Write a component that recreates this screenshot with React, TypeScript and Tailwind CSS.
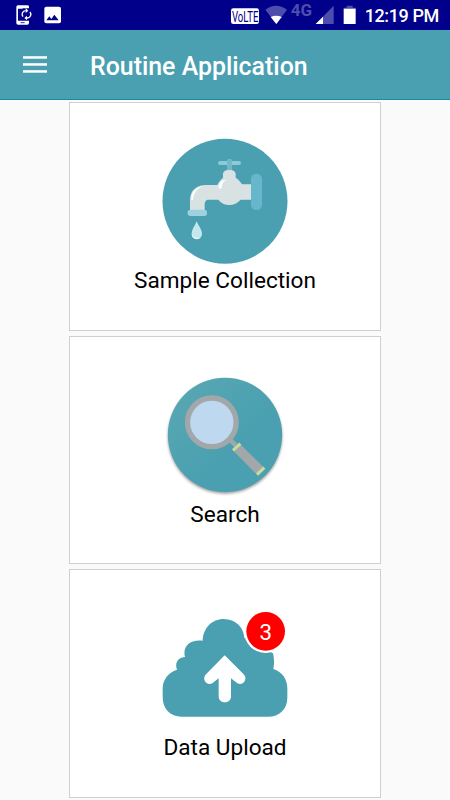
import type { ReactNode } from "react";

function StatusBar() {
  return (
    <div className="flex h-[30px] items-center justify-between bg-[#00008b] text-white">
      <svg width="70" height="30" viewBox="0 0 210 90" fill="none">
        <path
          d="M87 25V20Q87 16 82 16H54Q49 16 49 21V69Q49 74 54 74H82Q87 74 87 69V62H54V26H68V25Z"
          fill="#fff"
        />
        <path d="M62 68H74" stroke="#00008b" strokeWidth="2.5" />
        <path d="M77 32A11 11 0 0 0 69 50M81 54A11 11 0 0 0 90 36" stroke="#fff" strokeWidth="4" />
        <path d="M77 24L85 32L77 39ZM81 47L73 54L81 61Z" fill="#fff" />
        <rect x="133" y="20" width="50" height="50" rx="6" fill="#fff" />
        <path d="M139 61L148 49L154 57L163 44L176 61Z" fill="#00008b" />
      </svg>
      <svg width="230" height="30" viewBox="0 0 690 90" fill="none">
        <rect x="33" y="25" width="84" height="47" rx="7" fill="#fff" />
        <text
          x="36"
          y="65"
          fontSize="45"
          fontFamily="Roboto, sans-serif"
          fill="#00008b"
          textLength="79"
          lengthAdjust="spacingAndGlyphs"
        >
          VoLTE
        </text>
        <path d="M136 29Q168 6 201 29L169 72Z" fill="#4d4dae" />
        <path d="M152 51Q168 43 185 51L169 72Z" fill="#fff" />
        <text
          x="212"
          y="49"
          fontSize="47"
          fontFamily="Roboto, sans-serif"
          fontWeight="700"
          fill="#4d4dae"
          textLength="64"
          lengthAdjust="spacingAndGlyphs"
        >
          4G
        </text>
        <path d="M287 72L341 17V72Z" fill="#4d4dae" />
        <path d="M287 72L309 50V72Z" fill="#fff" />
        <path d="M371 26V23H380V17H398V23H407V26Z" fill="#4d4dae" />
        <path d="M371 26H407V72H371Z" fill="#fff" />
        <text x="434" y="66" fontSize="54" fontFamily="Roboto, sans-serif" fontWeight="500" fill="#fff" textLength="224">
          12:19 PM
        </text>
      </svg>
    </div>
  );
}

function FaucetIcon() {
  return (
    <svg width="140" height="138" viewBox="0 0 420 414">
      <circle cx="210" cy="213.500" r="187.500" fill="#4aa0b0" />
      <rect x="216" y="88" width="15" height="39" rx="5" fill="#73b8c6" />
      <rect x="189" y="93" width="69" height="12" rx="6" fill="#8bcad8" />
      <rect x="216" y="87" width="15" height="18" rx="5" fill="#73b8c6" />
      <path
        d="M105 243V211C105 181 124 165 154 165H187C191 156 197 148 204 143V133C204 124 211 120 223 120C235 120 242 124 242 133V143C250 148 256 155 261 163H290V209H257C239 230 205 230 190 209H162C152 209 149 215 149 224V243Z"
        fill="#d9e2e3"
      />
      <path d="M109 209C108 184 123 170 145 168C126 176 116 188 114 208Q112 213 109 209Z" fill="#fff" />
      <path d="M191 173C190 158 202 148 215 149C203 155 201 162 200 173Q196 178 191 173Z" fill="#fff" />
      <rect x="98" y="239" width="58" height="19" rx="8" fill="#9dd2de" />
      <rect x="288" y="131" width="33" height="109" rx="16" fill="#67b7cc" />
      <path d="M125 274C130 287 141 298 141 312A15.500 15.500 0 0 1 110 312C110 298 120 287 125 274Z" fill="#c3e7ee" />
      <path d="M110 312C115 323 126 326 136 323C126 331 110 326 110 312Z" fill="#edf8fa" />
    </svg>
  );
}

function SearchIcon() {
  return (
    <svg width="140" height="137" viewBox="0 0 420 411">
      <defs>
        <linearGradient id="disc" x1="0" y1="0" x2="1" y2="1">
          <stop offset="0.1" stopColor="#57a7b2" />
          <stop offset="0.6" stopColor="#4aa0b0" />
        </linearGradient>
        <filter id="shadow" x="-10%" y="-10%" width="120%" height="120%">
          <feGaussianBlur stdDeviation="5" />
        </filter>
      </defs>
      <circle cx="210" cy="215" r="171" fill="#000" opacity="0.4" filter="url(#shadow)" />
      <circle cx="210" cy="209.500" r="171.500" fill="url(#disc)" />
      <path d="M221 230L230 219L247 236L238 247Z" fill="#a2a7a9" />
      <circle cx="170.500" cy="172" r="73" fill="#bed8f0" stroke="#a2a7a9" strokeWidth="16" />
      <path d="M232 254L253 235L329 310L308 331Z" fill="#a2a7a9" />
      <path d="M234 256L256 236" stroke="#c9dc9d" strokeWidth="9" />
      <path d="M306 329L328 308" stroke="#c9dc9d" strokeWidth="9" />
    </svg>
  );
}

function UploadIcon({ count }: { count: number }) {
  return (
    <svg width="140" height="130" viewBox="0 0 420 390">
      <path
        d="M80 335C45 335 23 311 23 276V252C23 224 39 203 66 194C58 174 70 156 90 156C82 127 102 102 143 107C145 68 171 42 206 42C242 42 266 67 268 98L354 145Q360 168 355 192C382 200 397 223 397 250V278C397 312 373 335 339 335Z"
        fill="#4aa0b0"
      />
      <circle cx="332" cy="79" r="65" fill="#fff" />
      <circle cx="332" cy="79" r="58" fill="#f00" />
      <path
        d="M209 151L266 208C280 222 264 244 247 235L228 220V274C228 298 191 298 191 274V220L172 235C155 244 139 222 153 208Z"
        fill="#fff"
      />
      <text x="332" y="104" textAnchor="middle" fontSize="67" fontFamily="Roboto, sans-serif" fill="#fff">
        {count}
      </text>
    </svg>
  );
}

function MenuCard({ label, className, children }: { label: string; className: string; children: ReactNode }) {
  return (
    <button
      className={`flex w-[312px] flex-col items-center border border-[#cfcfcf] bg-white ${className}`}
    >
      {children}
      <span className="text-[22.600px] leading-[26px] text-black">{label}</span>
    </button>
  );
}

export default function App() {
  return (
    <div className="h-[800px] overflow-hidden bg-[#fafafa] font-['Roboto',sans-serif]">
      <StatusBar />

      {/* App bar */}
      <header className="flex h-[70px] items-center border-b border-[#168c9c] bg-[#4aa0b0] pl-[23px] text-white">
        <button aria-label="Menu">
          <svg width="24" height="17" viewBox="0 0 24 17" fill="#fff">
            <rect y="0.2" width="24" height="2.500" />
            <rect y="7.200" width="24" height="2.500" />
            <rect y="14.200" width="24" height="2.500" />
          </svg>
        </button>
        <h1 className="mt-1 ml-[43px] text-[24.900px] font-medium">Routine Application</h1>
      </header>

      {/* Menu */}
      <main className="flex flex-col items-center gap-[5px] pt-[2px]">
        <MenuCard label="Sample Collection" className="h-[229px] pt-[27px]">
          <FaucetIcon />
        </MenuCard>
        <MenuCard label="Search" className="h-[228px] pt-[28px]">
          <SearchIcon />
        </MenuCard>
        <MenuCard label="Data Upload" className="h-[229px] pt-[35px]">
          <UploadIcon count={3} />
        </MenuCard>
      </main>
    </div>
  );
}
